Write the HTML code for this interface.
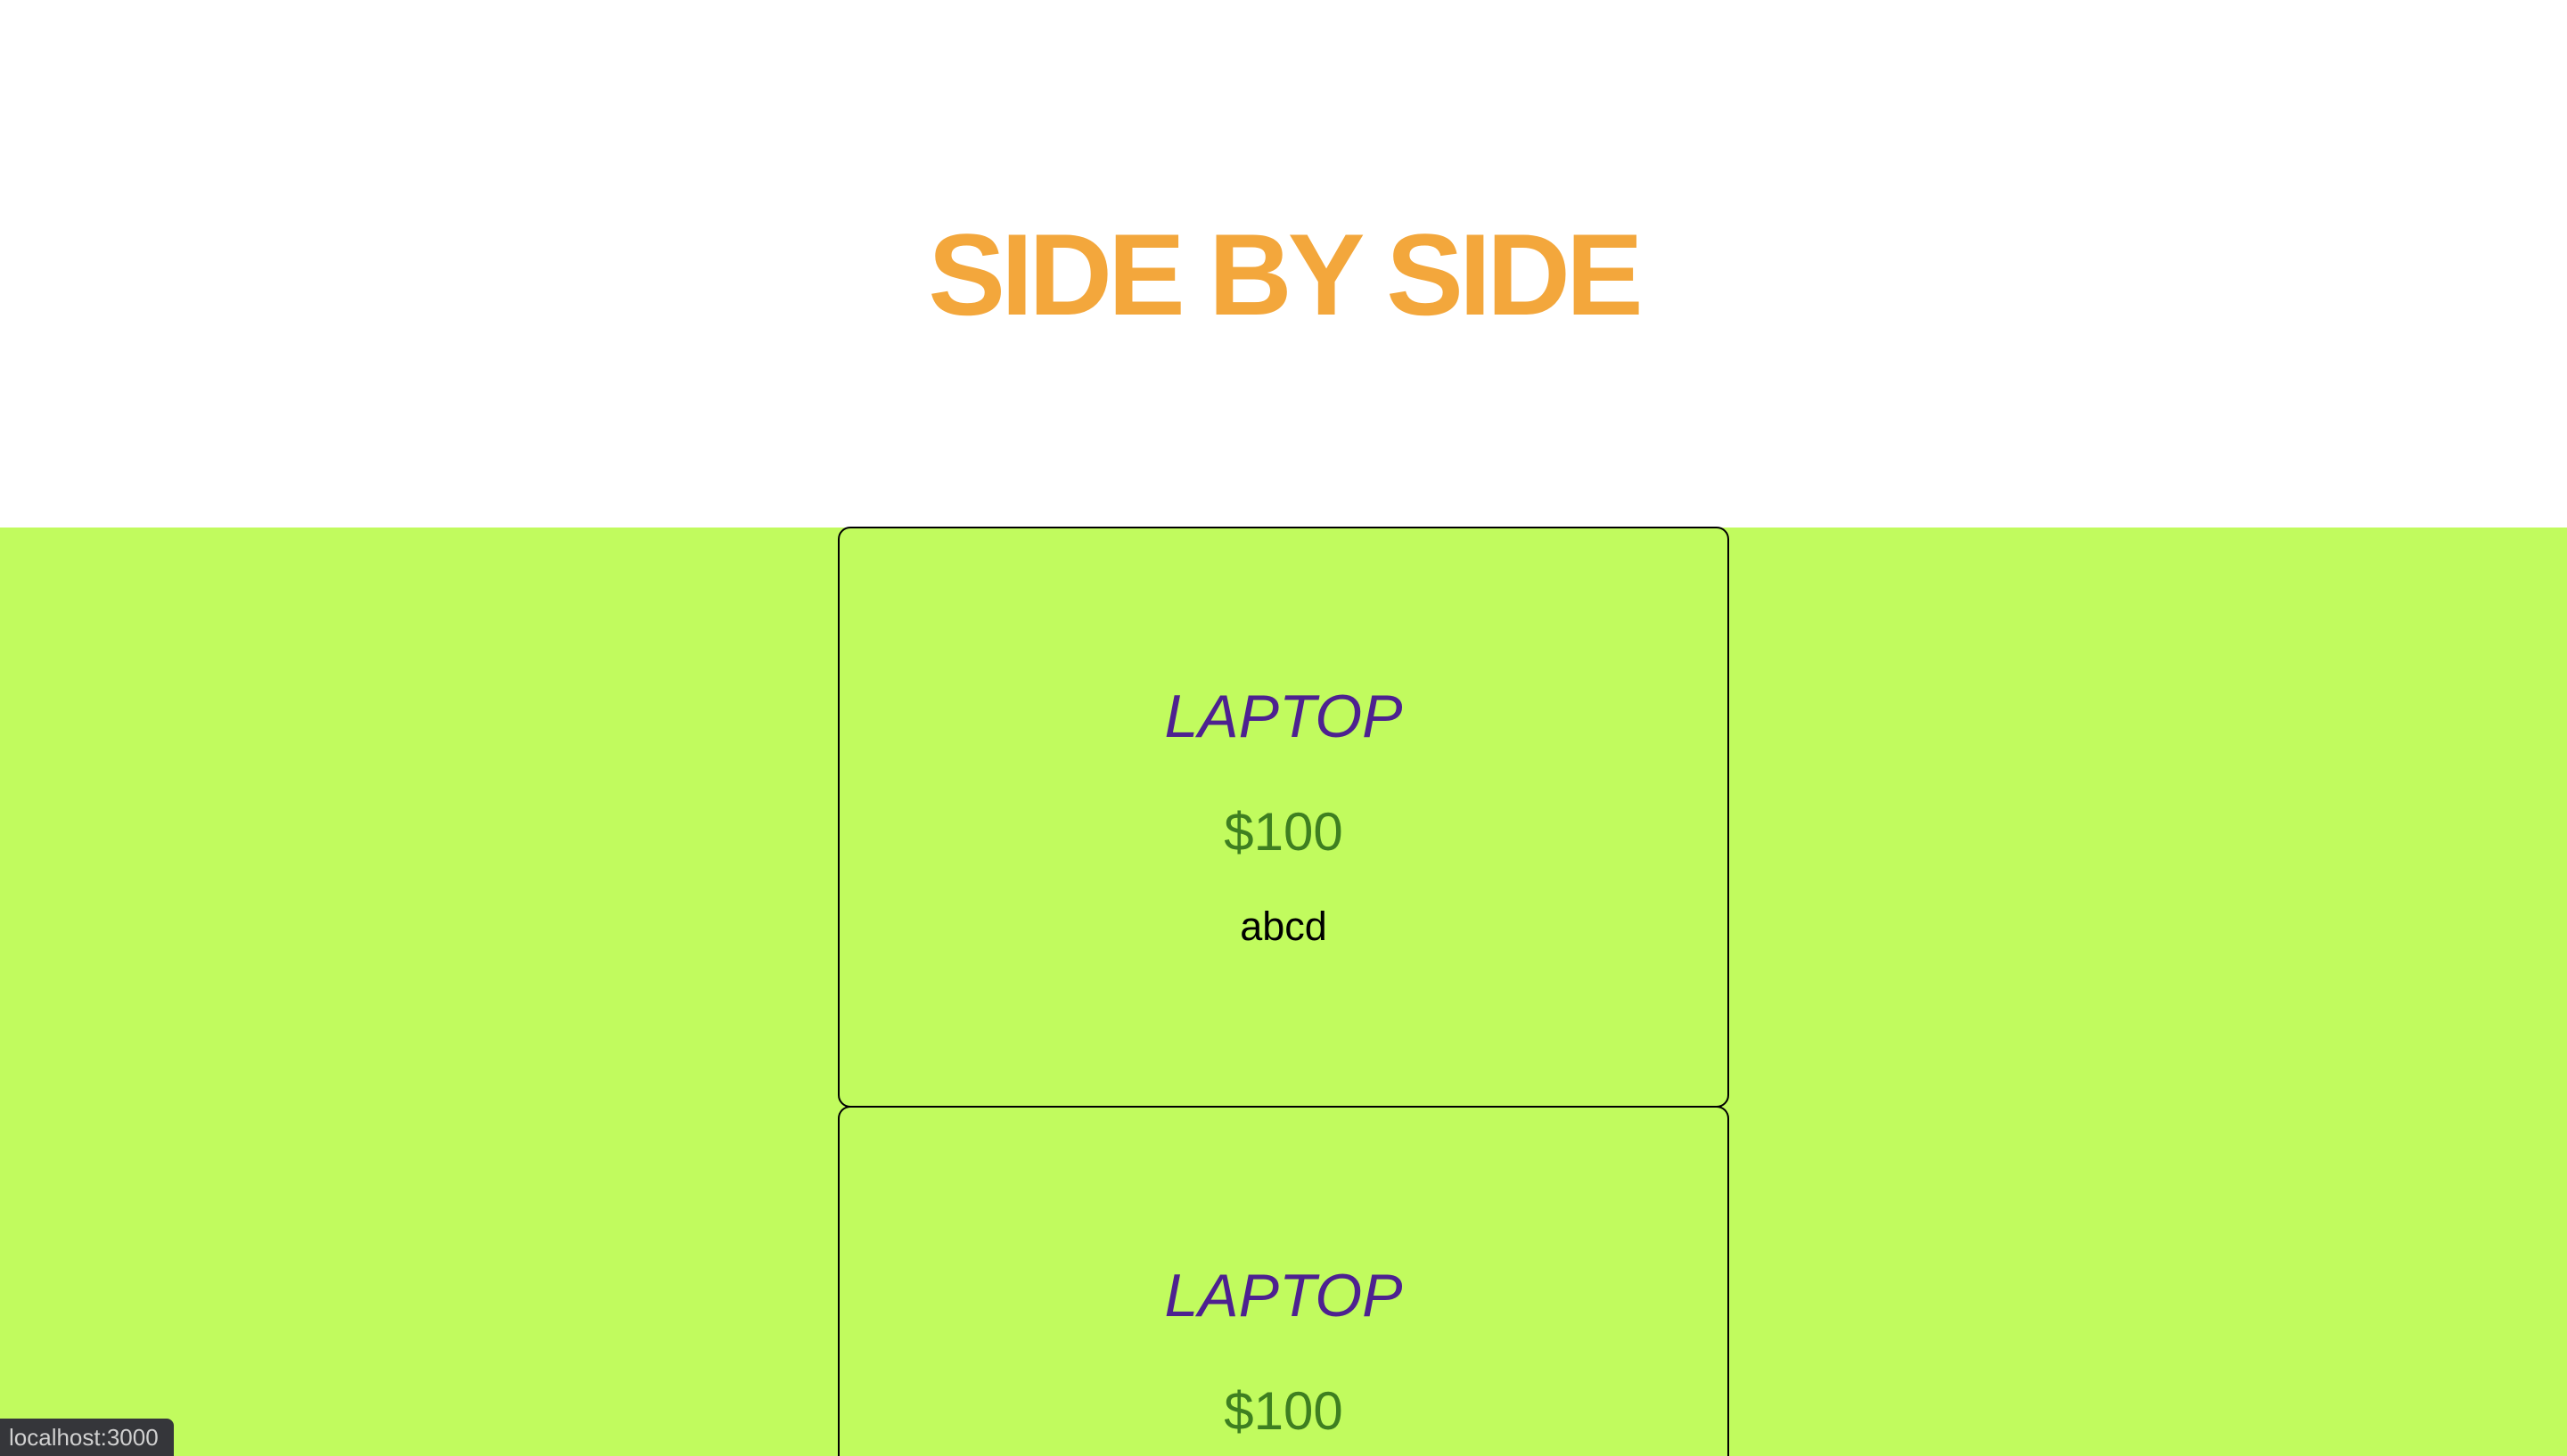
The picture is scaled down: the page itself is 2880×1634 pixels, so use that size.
<!DOCTYPE html>
<html><head><style>
html,body{margin:0;padding:0;width:2880px;height:1634px;overflow:hidden;background:#fff;font-family:"Liberation Sans",sans-serif;}
#wrap{position:relative;width:2880px;height:1634px;overflow:hidden;}
.green{position:absolute;left:0;top:592px;width:2880px;height:1042px;background:#c1fb5e;}
.card{position:absolute;left:940px;width:996px;height:648px;border:2px solid #000;border-radius:14px;box-sizing:content-box;}
.t{position:absolute;left:0;width:2880px;text-align:center;line-height:1;white-space:nowrap;}
</style></head><body><div id="wrap">
<div class="t" style="top:243px;font-size:130px;font-weight:bold;color:#f3a73c;letter-spacing:-5px;">SIDE BY SIDE</div>
<div class="green"></div>
<div class="card" style="top:591px;"></div>
<div class="card" style="top:1241px;height:400px;border-bottom:none;border-bottom-left-radius:0;border-bottom-right-radius:0;"></div>
<div class="t" style="top:770px;font-size:68px;font-style:italic;color:#4d2190;">LAPTOP</div>
<div class="t" style="top:904px;font-size:60px;color:#3e7f20;">$100</div>
<div class="t" style="top:1017px;font-size:45px;color:#000;">abcd</div>
<div class="t" style="top:1420px;font-size:68px;font-style:italic;color:#4d2190;">LAPTOP</div>
<div class="t" style="top:1554px;font-size:60px;color:#3e7f20;">$100</div>
<div style="position:absolute;left:0;top:1592px;width:195px;height:42px;background:#35363a;border-top-right-radius:8px;color:#d0d0d0;font-size:26px;line-height:42px;padding-left:10px;box-sizing:border-box;">localhost:3000</div>
</div></body></html>
